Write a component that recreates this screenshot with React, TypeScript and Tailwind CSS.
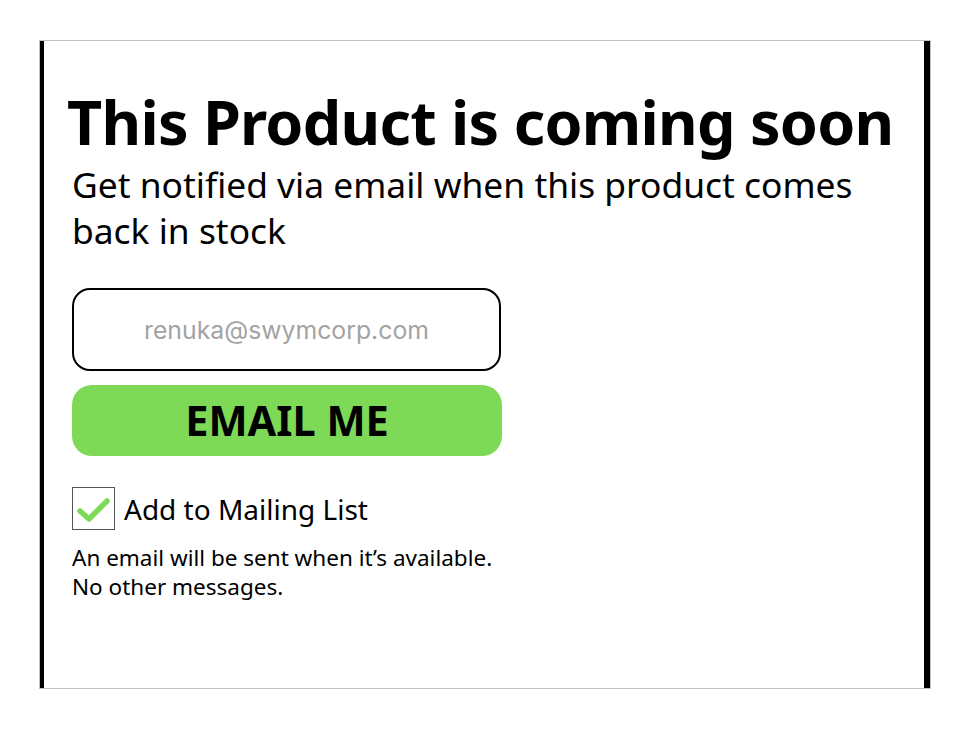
import { useState } from "react";

export default function App() {
  const [checked, setChecked] = useState(true);
  const [email, setEmail] = useState("");

  return (
    <div className="w-[978px] h-[734px] bg-white pt-[40px] pl-[39px]" style={{ fontFamily: '"Noto Sans", sans-serif' }}>
      {/* Card frame: thin gray outline, heavy black sides */}
      <div className="w-[892px] h-[649px] border border-[#c2c2c2]">
        <div className="h-full border-l-4 border-r-[6px] border-black pl-[23px] pt-[45px]">
          <h1 className="text-[61px] leading-[72px] font-bold text-black tracking-[-0.012em] whitespace-nowrap">
            This Product is coming soon
          </h1>

          <p className="mt-[3px] pl-[5px] w-[810px] text-[35.4px] leading-[46px] text-black">
            Get notified via email when this product comes back in stock
          </p>

          <div className="pl-[5px] mt-[35px] w-[435px] flex flex-col">
            <input
              type="email"
              value={email}
              onChange={(e) => setEmail(e.target.value)}
              placeholder="renuka@swymcorp.com"
              className="w-[429px] h-[83px] rounded-[18px] border-2 border-black text-center text-[24.8px] text-gray-700 placeholder-[#a3a3a3] outline-none"
              style={{ fontFamily: 'Inter, "Liberation Sans", sans-serif' }}
            />
            <button className="mt-[14px] w-[430px] h-[71px] rounded-[20px] bg-[#7ed957] text-[41.5px] font-bold text-black leading-none">
              EMAIL ME
            </button>

            <label className="mt-[31px] flex items-center gap-[9px] cursor-pointer">
              <span
                onClick={() => setChecked((v) => !v)}
                className="w-[43px] h-[43px] border border-[#555] bg-white flex items-center justify-center shrink-0"
              >
                {checked && (
                  <svg width="38" height="38" viewBox="0 0 38 38" fill="none">
                    <path d="M5 21 L14 29 L32 11" stroke="#7ed957" strokeWidth="5.5" strokeLinecap="round" strokeLinejoin="round" />
                  </svg>
                )}
              </span>
              <span className="text-[28px] text-black">Add to Mailing List</span>
            </label>

            <p className="mt-[13px] text-[22.5px] leading-[29px] text-black whitespace-nowrap">
              An email will be sent when it’s available.
              <br />
              No other messages.
            </p>
          </div>
        </div>
      </div>
    </div>
  );
}
